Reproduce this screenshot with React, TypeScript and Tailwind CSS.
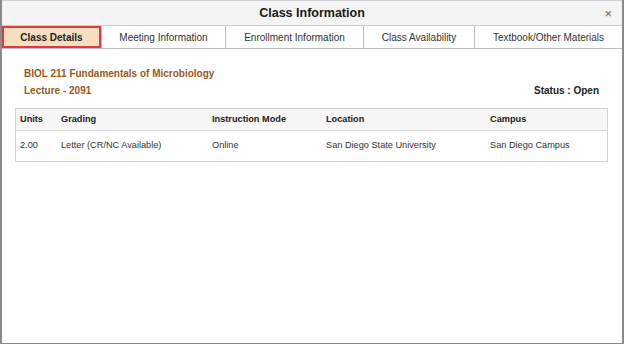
const tabs = [
  { label: "Class Details", w: "w-[99px]" },
  { label: "Meeting Information", w: "w-[124px]" },
  { label: "Enrollment Information", w: "w-[138px]" },
  { label: "Class Availability", w: "w-[111px]" },
  { label: "Textbook/Other Materials", w: "flex-1" },
];

const cols = [
  { head: "Units", value: "2.00", w: "w-[41px]" },
  { head: "Grading", value: "Letter (CR/NC Available)", w: "w-[151px]" },
  { head: "Instruction Mode", value: "Online", w: "w-[114px]" },
  { head: "Location", value: "San Diego State University", w: "w-[164px]" },
  { head: "Campus", value: "San Diego Campus", w: "flex-1" },
];

export default function App() {
  return (
    <div className="w-[624px] h-[344px] bg-white font-['Liberation_Sans',Arial,sans-serif] text-[#333] border-l-2 border-r-2 border-b border-[#8a8a8a] flex flex-col">
      {/* title bar */}
      <div className="h-[26px] bg-[#f4f4f4] border-t border-b border-[#cfcfcf] flex items-center relative">
        <div className="flex-1 text-center text-[12.5px] font-bold text-[#1a1a1a]">Class Information</div>
        <span className="absolute right-[10px] top-[6px] text-[13px] text-[#666] leading-none">×</span>
      </div>

      {/* tabs */}
      <div className="flex h-[23px] border-b border-[#bdbdbd]">
        {tabs.map((t, i) =>
          i === 0 ? (
            <div
              key={t.label}
              className={`${t.w} bg-[#f6dfc1] border-2 border-[#e0393e] flex items-center justify-center text-[10px] font-bold text-[#222]`}
            >
              {t.label}
            </div>
          ) : (
            <div
              key={t.label}
              className={`${t.w} border-l border-[#bdbdbd] flex items-center justify-center text-[10px] text-[#333]`}
            >
              {t.label}
            </div>
          )
        )}
      </div>

      {/* body */}
      <div className="px-[13px] pt-[16px]">
        <div className="px-[9px] flex justify-between items-end">
          <div className="text-[10px] font-bold text-[#9d5820] leading-[17px]">
            <div>BIOL 211 Fundamentals of Microbiology</div>
            <div>Lecture - 2091</div>
          </div>
          <div className="text-[10px] font-bold text-[#222] pr-[1px] leading-[17px]">Status : Open</div>
        </div>

        <div className="mt-[9px] w-[593px] border border-[#d4d4d4]">
          <div className="flex h-[22px] items-center bg-[#f7f7f7] border-b border-[#d9d9d9] px-[4px]">
            {cols.map((c) => (
              <div key={c.head} className={`${c.w} text-[9.2px] font-bold text-[#222]`}>
                {c.head}
              </div>
            ))}
          </div>
          <div className="flex h-[30px] items-center px-[4px]">
            {cols.map((c) => (
              <div key={c.head} className={`${c.w} text-[9.2px] text-[#333]`}>
                {c.value}
              </div>
            ))}
          </div>
        </div>
      </div>
    </div>
  );
}
